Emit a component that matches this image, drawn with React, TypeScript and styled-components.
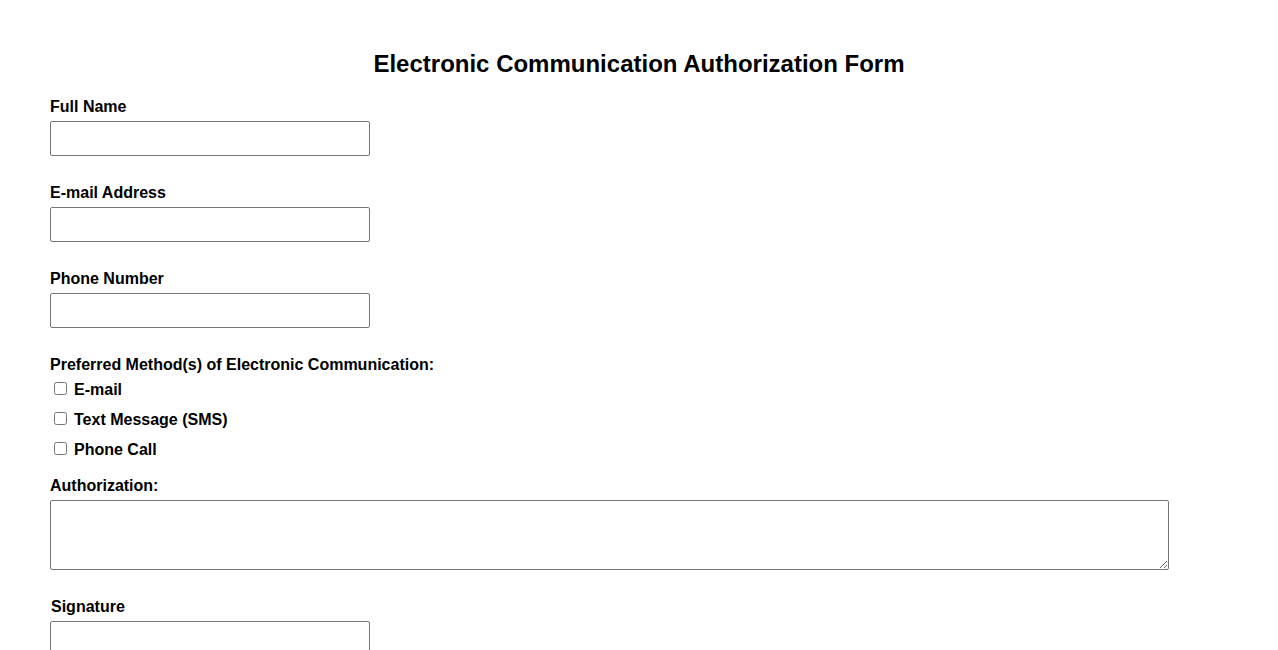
import styled, { createGlobalStyle } from "styled-components";

const GlobalStyle = createGlobalStyle`
  body {
    margin: 0;
    background: #ffffff;
    font-family: "Liberation Sans", Arial, sans-serif;
    color: #000000;
  }
`;

const App = () => {
  return (
    <>
      <GlobalStyle />
      <Page>
        <Title>Electronic Communication Authorization Form</Title>
        <Form>
          <Field>
            <Label htmlFor="fullName">Full Name</Label>
            <TextInput id="fullName" type="text" />
          </Field>
          <Field>
            <Label htmlFor="email">E-mail Address</Label>
            <TextInput id="email" type="email" />
          </Field>
          <Field>
            <Label htmlFor="phone">Phone Number</Label>
            <TextInput id="phone" type="tel" />
          </Field>
          <Group>
            <GroupLabel>Preferred Method(s) of Electronic Communication:</GroupLabel>
            <CheckRow>
              <Check type="checkbox" id="m-email" />
              <CheckLabel htmlFor="m-email">E-mail</CheckLabel>
            </CheckRow>
            <CheckRow>
              <Check type="checkbox" id="m-sms" />
              <CheckLabel htmlFor="m-sms">Text Message (SMS)</CheckLabel>
            </CheckRow>
            <CheckRow>
              <Check type="checkbox" id="m-call" />
              <CheckLabel htmlFor="m-call">Phone Call</CheckLabel>
            </CheckRow>
          </Group>
          <Field>
            <Label htmlFor="auth">Authorization:</Label>
            <TextArea id="auth" />
          </Field>
          <Field>
            <Label htmlFor="sig" $indent>
              Signature
            </Label>
            <TextInput id="sig" type="text" />
          </Field>
        </Form>
      </Page>
    </>
  );
};

export default App;

const Page = styled.div`
  padding: 50px 50px 40px;
`;

const Title = styled.h1`
  margin: 0 0 19px;
  text-align: center;
  font-size: 24px;
  line-height: 28px;
  font-weight: bold;
`;

const Form = styled.form`
  display: flex;
  flex-direction: column;
`;

const Field = styled.div`
  display: flex;
  flex-direction: column;
  align-items: flex-start;
  margin-bottom: 27px;
`;

const Group = styled.div`
  display: flex;
  flex-direction: column;
  margin-bottom: 12px;
`;

const Label = styled.label<{ $indent?: boolean }>`
  display: block;
  font-size: 16px;
  line-height: 18px;
  font-weight: bold;
  padding-top: 1px;
  margin: 0 0 5px ${({ $indent }) => ($indent ? "1px" : "0")};
`;

const GroupLabel = styled.span`
  display: block;
  font-size: 16px;
  line-height: 18px;
  font-weight: bold;
  padding-top: 1px;
  margin-bottom: 0;
`;

const TextInput = styled.input`
  box-sizing: border-box;
  width: 320px;
  height: 35px;
  margin: 0;
  padding: 4px 8px;
  border: 1px solid #767676;
  border-radius: 2px;
  font-size: 16px;
  font-family: "Liberation Sans", Arial, sans-serif;
`;

const TextArea = styled.textarea`
  box-sizing: border-box;
  width: 1119px;
  height: 70px;
  margin: 0;
  padding: 4px 8px;
  border: 1px solid #767676;
  border-radius: 2px;
  font-size: 16px;
  font-family: "Liberation Sans", Arial, sans-serif;
`;

const CheckRow = styled.div`
  display: flex;
  align-items: center;
  height: 30px;
  margin-top: 1px;
  margin-bottom: -1px;
`;

const Check = styled.input`
  width: 13px;
  height: 13px;
  margin: -3px 7px 0 4px;
`;

const CheckLabel = styled.label`
  font-size: 16px;
  line-height: 18px;
  font-weight: bold;
`;
